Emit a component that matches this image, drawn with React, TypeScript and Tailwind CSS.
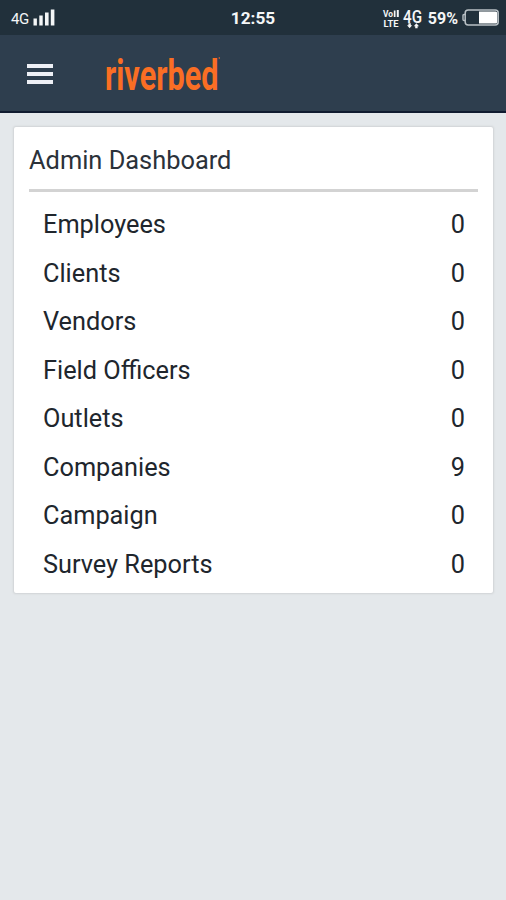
type Stat = {
  label: string
  value: number
}

const stats: Stat[] = [
  { label: 'Employees', value: 0 },
  { label: 'Clients', value: 0 },
  { label: 'Vendors', value: 0 },
  { label: 'Field Officers', value: 0 },
  { label: 'Outlets', value: 0 },
  { label: 'Companies', value: 9 },
  { label: 'Campaign', value: 0 },
  { label: 'Survey Reports', value: 0 },
]

function SignalBars() {
  return (
    <svg className="ml-1 h-[17px] w-[22px]" viewBox="0 0 22 17" fill="#f4f6f7">
      <rect x="0.5" y="9.5" width="3.4" height="7" />
      <rect x="6.3" y="6.5" width="3.4" height="10" />
      <rect x="12" y="3.5" width="3.6" height="13" />
      <rect x="17.8" y="0.5" width="3.6" height="16" />
    </svg>
  )
}

function VolteIcon() {
  return (
    <svg className="h-6 w-4 overflow-visible" viewBox="0 0 16 24" fill="#f4f6f7" fontFamily="Roboto, sans-serif" fontWeight="700">
      <text x="0" y="11" fontSize="8.5" textLength="10" lengthAdjust="spacingAndGlyphs">Vo</text>
      <path d="M10.8 4.5h1.7V11h-1.7zM13.8 4h2v7h-2z" />
      <text x="0.5" y="20.5" fontSize="9.5" textLength="15" lengthAdjust="spacingAndGlyphs">LTE</text>
    </svg>
  )
}

function DataIcon() {
  return (
    <svg className="ml-[4px] h-6 w-[20px] overflow-visible" viewBox="0 0 20 24" fill="#f4f6f7" fontFamily="Roboto, sans-serif">
      <text x="0" y="16.5" fontSize="18" fontWeight="500" textLength="19" lengthAdjust="spacingAndGlyphs">4G</text>
      <path d="M4 19.3h1.4v-2.1h2.4v2.1h1.4l-2.6 3zM10.8 20.2l2.6-3 2.6 3h-1.4v2.1h-2.4v-2.1z" />
    </svg>
  )
}

function BatteryIcon() {
  return (
    <svg className="ml-[4px] h-[17px] w-[37px]" viewBox="0 0 37 17" fill="none">
      <path d="M3.6 5.5H2Q1 5.5 1 6.5v4q0 1 1 1h1.6" stroke="#b9c0c5" strokeWidth="1.4" />
      <rect x="3.2" y="1" width="33" height="15" rx="3" stroke="#b9c0c5" strokeWidth="1.5" />
      <path d="M17 2.5h16.7q1.5 0 1.5 1.5v9q0 1.5-1.5 1.5H17z" fill="#fff" />
    </svg>
  )
}

function StatusBar() {
  return (
    <div className="grid h-[35px] grid-cols-[1fr_auto_1fr] items-center bg-[#21303b] pr-[7px] pl-[11px] text-[#f4f6f7]">
      <div className="flex items-center">
        <span className="pt-[3px] text-[15px] leading-4 tracking-[-0.4px]">4G</span>
        <SignalBars />
      </div>
      <span className="mr-[4px] pt-[3px] text-[17.2px] font-bold">12:55</span>
      <div className="flex items-center justify-end">
        <VolteIcon />
        <DataIcon />
        <span className="ml-[5px] pt-[2px] text-[16px] font-bold">59%</span>
        <BatteryIcon />
      </div>
    </div>
  )
}

function Header() {
  return (
    <header className="flex h-[78px] items-center border-b-2 border-[#101b30] bg-[#2e3e4e] pl-[27px]">
      <button className="flex w-[26px] flex-col gap-[4px] pt-px" aria-label="Menu">
        <span className="h-[4px] w-full bg-[#eef0f6]" />
        <span className="h-[4px] w-full bg-[#eef0f6]" />
        <span className="h-[4px] w-full bg-[#eef0f6]" />
      </button>
      <svg className="ml-[52px] h-[60px] w-[118px] overflow-visible" viewBox="0 0 118 60" fill="#fa6e24">
        <text x="0" y="46.5" fontFamily="Roboto, sans-serif" fontSize="42" fontWeight="700" textLength="113.5" lengthAdjust="spacingAndGlyphs">
          riverbed
        </text>
        <circle cx="114.3" cy="15" r="0.7" />
      </svg>
    </header>
  )
}

export default function App() {
  return (
    <div className="min-h-screen w-full bg-[#e4e8eb] font-['Roboto',sans-serif]">
      <StatusBar />
      <Header />
      <main className="pt-[14px] pr-[13px] pl-[14px]">
        <section className="h-[466px] rounded-[2px] bg-white px-[15px] shadow-[0_0_2px_1px_#d0d3d6]">
          <h1 className="h-[62px] pt-4 text-[25.4px] leading-[34px] text-[#2b323a]">
            Admin Dashboard
          </h1>
          <div className="h-[3px] bg-[#d3d3d3]" />
          <ul className="pt-[9px] pr-[13px] pl-[14px]">
            {stats.map((stat) => (
              <li key={stat.label} className="flex h-[48.5px] items-center justify-between text-[25.3px] text-[#20262d]">
                <span>{stat.label}</span>
                <span>{stat.value}</span>
              </li>
            ))}
          </ul>
        </section>
      </main>
    </div>
  )
}
